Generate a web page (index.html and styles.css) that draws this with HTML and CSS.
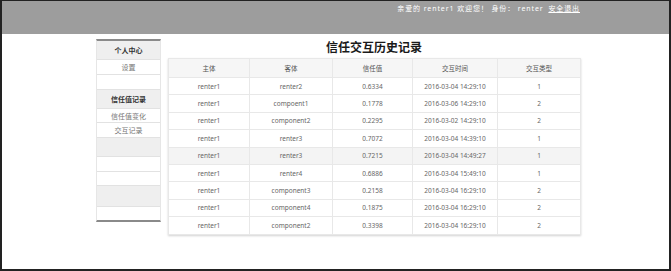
FILE: index.html
```html
<!DOCTYPE html>
<html lang="zh-CN">
<head>
    <meta charset="UTF-8">
    <title>信任交互历史记录</title>
    <link rel="stylesheet" href="styles.css">
</head>
<body>
<div class="frame">
    <div class="topbar">
        <div class="topbar-inner">
            亲爱的 renter1 欢迎您！ 身份： renter <a href="#" class="logout">安全退出</a>
        </div>
    </div>

    <div class="content">
        <div class="sidebar">
            <div class="side-item side-head h19">个人中心</div>
            <div class="side-item h15">设置</div>
            <div class="side-item h15"></div>
            <div class="side-item side-head h19">信任值记录</div>
            <div class="side-item h14">信任值变化</div>
            <div class="side-item h15">交互记录</div>
            <div class="side-item gray h19"></div>
            <div class="side-item h15"></div>
            <div class="side-item h14"></div>
            <div class="side-item gray h21"></div>
            <div class="side-item h13 last"></div>
        </div>

        <div class="main">
            <h1 class="title">信任交互历史记录</h1>
            <table class="history">
                <colgroup>
                    <col style="width:81px">
                    <col style="width:83px">
                    <col style="width:80px">
                    <col style="width:85px">
                    <col style="width:83px">
                </colgroup>
                <thead>
                    <tr><th>主体</th><th>客体</th><th>信任值</th><th>交互时间</th><th>交互类型</th></tr>
                </thead>
                <tbody>
                    <tr><td>renter1</td><td>renter2</td><td>0.6334</td><td>2016-03-04 14:29:10</td><td>1</td></tr>
                    <tr><td>renter1</td><td>compoent1</td><td>0.1778</td><td>2016-03-06 14:29:10</td><td>2</td></tr>
                    <tr><td>renter1</td><td>component2</td><td>0.2295</td><td>2016-03-02 14:29:10</td><td>2</td></tr>
                    <tr><td>renter1</td><td>renter3</td><td>0.7072</td><td>2016-03-04 14:39:10</td><td>1</td></tr>
                    <tr class="hover"><td>renter1</td><td>renter3</td><td>0.7215</td><td>2016-03-04 14:49:27</td><td>1</td></tr>
                    <tr><td>renter1</td><td>renter4</td><td>0.6886</td><td>2016-03-04 15:49:10</td><td>1</td></tr>
                    <tr><td>renter1</td><td>component3</td><td>0.2158</td><td>2016-03-04 16:29:10</td><td>2</td></tr>
                    <tr><td>renter1</td><td>component4</td><td>0.1875</td><td>2016-03-04 16:29:10</td><td>2</td></tr>
                    <tr><td>renter1</td><td>component2</td><td>0.3398</td><td>2016-03-04 16:29:10</td><td>2</td></tr>
                </tbody>
            </table>
        </div>
    </div>
</div>
</body>
</html>
```

FILE: styles.css
```css
html, body {
    margin: 0;
    padding: 0;
}

body {
    font-family: "Noto Sans", "Noto Sans CJK SC", sans-serif;
    background-color: #fff;
}

.frame {
    width: 671px;
    height: 271px;
    box-sizing: border-box;
    border: 2px solid #222;
    border-top-width: 1px;
    overflow: hidden;
}

.topbar {
    height: 33px;
    background-color: #9d9d9d;
}

.topbar-inner {
    width: 484px;
    margin-left: 94px;
    padding-top: 3px;
    text-align: right;
    color: #fff;
    font-size: 7px;
    line-height: 10px;
    letter-spacing: 0.9px;
}

.logout {
    color: #fff;
    text-decoration: underline;
    margin-left: 2px;
}

.content {
    display: flex;
    align-items: flex-start;
    gap: 7px;
    margin-left: 94px;
    padding-top: 5px;
}

.sidebar {
    width: 65px;
    border-top: 2px solid #8a8a8a;
    border-bottom: 2px solid #8a8a8a;
    border-left: 1px solid #e6e6e6;
    border-right: 1px solid #e6e6e6;
    box-sizing: border-box;
}

.side-item {
    display: flex;
    align-items: center;
    justify-content: center;
    box-sizing: border-box;
    border-bottom: 1px solid #e2e2e2;
    font-size: 7px;
    color: #777;
    background-color: #fff;
}

.side-item.last {
    border-bottom: none;
}

.side-head {
    background-color: #efefef;
    color: #333;
    font-weight: bold;
}

.side-item.gray {
    background-color: #efefef;
}

.h13 { height: 13px; }
.h14 { height: 14px; }
.h15 { height: 15px; }
.h19 { height: 19px; }
.h21 { height: 21px; }

.main {
    width: 412px;
}

.title {
    margin: 0 0 2px 0;
    padding-top: 1px;
    font-size: 12px;
    line-height: 16px;
    font-weight: bold;
    color: #1a1a1a;
    text-align: center;
}

.history {
    width: 412px;
    border-collapse: collapse;
    table-layout: fixed;
    border: 1px solid #e4e4e4;
    box-shadow: 0 1px 2px rgba(0,0,0,0.18);
    font-size: 6.5px;
    color: #666;
}

.history th,
.history td {
    border: 1px solid #e8e8e8;
    text-align: center;
    padding: 0;
    white-space: nowrap;
}

.history th {
    height: 18px;
    font-weight: normal;
    color: #555;
    background-color: #f6f6f6;
}

.history td {
    height: 16.4px;
}

.history tr.hover td {
    background-color: #f4f4f4;
}
```
